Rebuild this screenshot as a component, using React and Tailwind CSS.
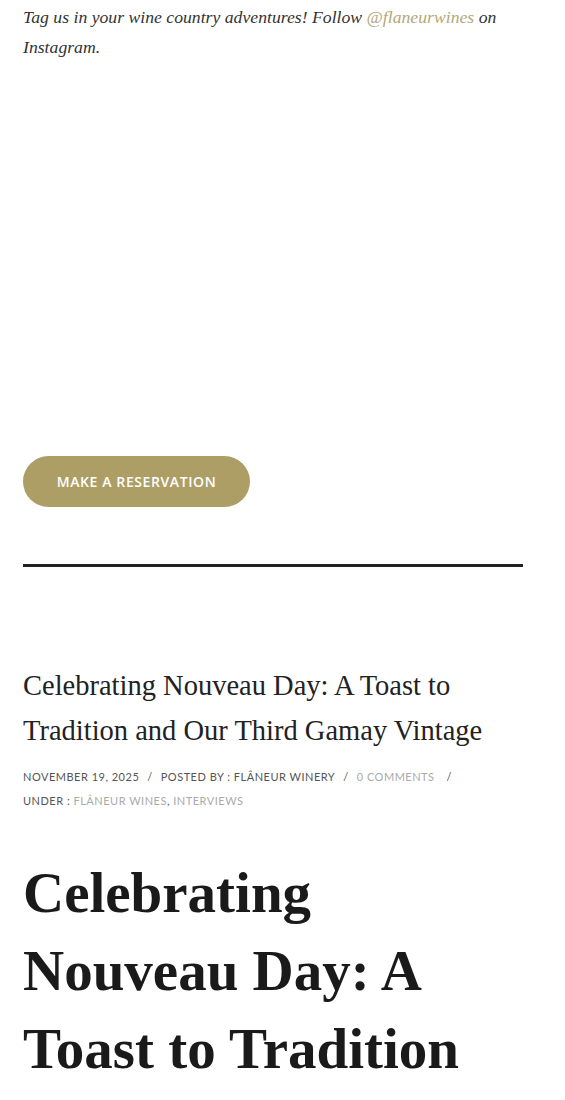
export default function App() {
  return (
    <div className="bg-white min-h-[1100px] px-[23px] pt-[2px] overflow-hidden">
      <p className="italic text-[17.7px] leading-[30px] text-[#333] w-[500px]" style={{ fontFamily: '"Liberation Serif", serif' }}>
        Tag us in your wine country adventures! Follow{' '}
        <a href="#" className="text-[#b3a878]">@flaneurwines</a> on Instagram.
      </p>

      {/* instagram feed placeholder */}
      <div className="h-[394px]" />

      <a
        href="#"
        className="flex items-center justify-center w-[227px] h-[51px] rounded-full bg-[#ad9e66] text-white text-[14px] font-semibold uppercase tracking-[0.6px]"
        style={{ fontFamily: '"Open Sans", sans-serif' }}
      >
        Make a Reservation
      </a>

      <hr className="mt-[57px] w-[500px] border-0 h-[3px] bg-[#222]" />

      <article className="mt-[96px]">
        <h2 className="text-[28.5px] leading-[45px] text-[#222] w-[500px]" style={{ fontFamily: '"Liberation Serif", serif' }}>
          Celebrating Nouveau Day: A Toast to Tradition and Our Third Gamay Vintage
        </h2>
        <div
          className="mt-[12px] text-[11px] leading-[24px] uppercase tracking-[0.5px] text-[#555] w-[500px]"
          style={{ fontFamily: 'Lato, sans-serif' }}
        >
          <span>November 19, 2025</span>
          <span className="mx-[8px]">/</span>
          <span>Posted by : Flâneur Winery</span>
          <span className="mx-[8px]">/</span>
          <a href="#" className="text-[#aaa]">0 Comments</a>
          <span className="ml-[12px]">/</span>
          <br />
          <span>Under : </span>
          <a href="#" className="text-[#aaa]">Flâneur Wines</a>,{' '}
          <a href="#" className="text-[#aaa]">Interviews</a>
        </div>

        <h1
          className="mt-[41px] text-[57px] leading-[78px] font-bold text-[#1a1a1a] w-[500px]"
          style={{ fontFamily: '"Liberation Serif", serif' }}
        >
          Celebrating Nouveau Day: A Toast to Tradition
        </h1>
      </article>
    </div>
  );
}
